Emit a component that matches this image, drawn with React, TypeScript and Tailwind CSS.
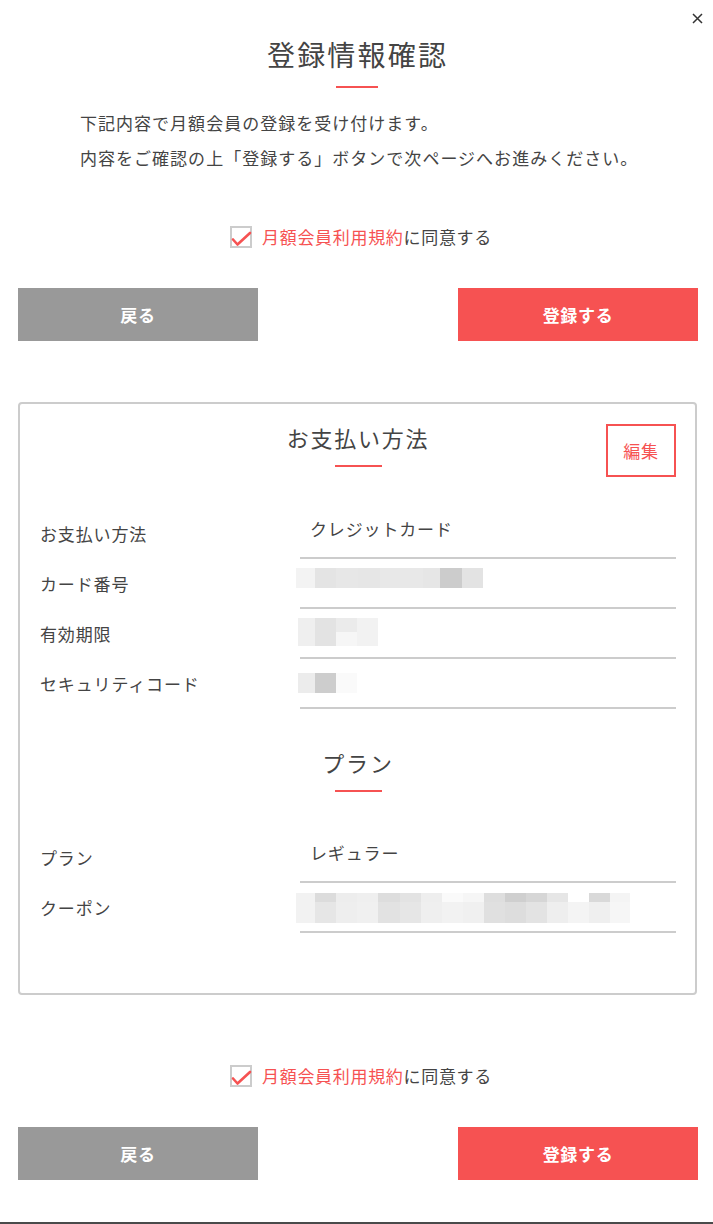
type Cell = { w: string; top: string; bottom: string; split: string };

// pixelated (masked) values
const cardNo: Cell[] = [
  { w: "w-[19px]", top: "bg-[#f3f3f3]", bottom: "bg-[#f3f3f3]", split: "h-[10px]" },
  { w: "w-[21px]", top: "bg-[#e4e4e4]", bottom: "bg-[#e4e4e4]", split: "h-[10px]" },
  { w: "w-[22px]", top: "bg-[#e7e7e7]", bottom: "bg-[#e7e7e7]", split: "h-[10px]" },
  { w: "w-[22px]", top: "bg-[#e6e6e6]", bottom: "bg-[#e6e6e6]", split: "h-[10px]" },
  { w: "w-[22px]", top: "bg-[#e8e8e8]", bottom: "bg-[#e8e8e8]", split: "h-[10px]" },
  { w: "w-[21px]", top: "bg-[#e8e8e8]", bottom: "bg-[#e8e8e8]", split: "h-[10px]" },
  { w: "w-[17px]", top: "bg-[#e6e6e6]", bottom: "bg-[#e6e6e6]", split: "h-[10px]" },
  { w: "w-[22px]", top: "bg-[#cccccc]", bottom: "bg-[#cccccc]", split: "h-[10px]" },
  { w: "w-[21px]", top: "bg-[#e3e3e3]", bottom: "bg-[#e3e3e3]", split: "h-[10px]" },
];

const expiry: Cell[] = [
  { w: "w-[17px]", top: "bg-[#efefef]", bottom: "bg-[#efefef]", split: "h-[14px]" },
  { w: "w-[21px]", top: "bg-[#e3e3e3]", bottom: "bg-[#e3e3e3]", split: "h-[14px]" },
  { w: "w-[21px]", top: "bg-[#ebebeb]", bottom: "bg-[#f6f6f6]", split: "h-[14px]" },
  { w: "w-[21px]", top: "bg-[#f2f2f2]", bottom: "bg-[#f2f2f2]", split: "h-[14px]" },
];

const security: Cell[] = [
  { w: "w-[17px]", top: "bg-[#ececec]", bottom: "bg-[#ececec]", split: "h-[10px]" },
  { w: "w-[21px]", top: "bg-[#cdcdcd]", bottom: "bg-[#cdcdcd]", split: "h-[10px]" },
  { w: "w-[21px]", top: "bg-[#fafafa]", bottom: "bg-[#fafafa]", split: "h-[10px]" },
];

const coupon: Cell[] = [
  { w: "w-[19px]", top: "bg-[#f2f2f2]", bottom: "bg-[#f2f2f2]", split: "h-[9px]" },
  { w: "w-[21px]", top: "bg-[#dcdcdc]", bottom: "bg-[#e6e6e6]", split: "h-[9px]" },
  { w: "w-[21px]", top: "bg-[#ededed]", bottom: "bg-[#eeeeee]", split: "h-[9px]" },
  { w: "w-[21px]", top: "bg-[#efefef]", bottom: "bg-[#f0f0f0]", split: "h-[9px]" },
  { w: "w-[22px]", top: "bg-[#dddddd]", bottom: "bg-[#e2e2e2]", split: "h-[9px]" },
  { w: "w-[21px]", top: "bg-[#e3e3e3]", bottom: "bg-[#e6e6e6]", split: "h-[9px]" },
  { w: "w-[21px]", top: "bg-[#eeeeee]", bottom: "bg-[#efefef]", split: "h-[9px]" },
  { w: "w-[21px]", top: "bg-[#fafafa]", bottom: "bg-[#f2f2f2]", split: "h-[9px]" },
  { w: "w-[21px]", top: "bg-[#f6f6f6]", bottom: "bg-[#f0f0f0]", split: "h-[9px]" },
  { w: "w-[21px]", top: "bg-[#dedede]", bottom: "bg-[#e0e0e0]", split: "h-[9px]" },
  { w: "w-[21px]", top: "bg-[#cfcfcf]", bottom: "bg-[#dddddd]", split: "h-[9px]" },
  { w: "w-[21px]", top: "bg-[#d6d6d6]", bottom: "bg-[#e3e3e3]", split: "h-[9px]" },
  { w: "w-[21px]", top: "bg-[#e6e6e6]", bottom: "bg-[#eeeeee]", split: "h-[9px]" },
  { w: "w-[21px]", top: "bg-[#ffffff]", bottom: "bg-[#f4f4f4]", split: "h-[9px]" },
  { w: "w-[21px]", top: "bg-[#d9d9d9]", bottom: "bg-[#efefef]", split: "h-[9px]" },
  { w: "w-[20px]", top: "bg-[#f4f4f4]", bottom: "bg-[#f6f6f6]", split: "h-[9px]" },
];

function Mosaic({ cells, h, className }: { cells: Cell[]; h: string; className: string }) {
  return (
    <div className={`flex ${h} ${className}`}>
      {cells.map((c, i) => (
        <div key={i} className={`flex flex-col ${c.w}`}>
          <div className={`${c.split} ${c.top}`} />
          <div className={`flex-1 ${c.bottom}`} />
        </div>
      ))}
    </div>
  );
}

function Agree() {
  return (
    <div className="flex items-center justify-center pl-[9px]">
      <span className="relative h-[22px] w-[22px] border-2 border-[#cccccc] bg-white">
        <svg className="absolute -left-[2px] -top-[2px]" width="22" height="22" viewBox="0 0 22 22">
          <path
            d="M3 13.5 L7.5 18.5 L20 7"
            fill="none"
            stroke="#f65252"
            strokeWidth="2.6"
            strokeLinecap="round"
            strokeLinejoin="round"
          />
        </svg>
      </span>
      <span className="ml-[10px] text-[17px] leading-[22px] tracking-[0.04em] text-[#444444]">
        <span className="text-[#f65252]">月額会員利用規約</span>に同意する
      </span>
    </div>
  );
}

function Buttons() {
  return (
    <div className="flex justify-between pl-[18px] pr-[15px]">
      <button className="h-[53px] w-[240px] bg-[#999999] text-[17px] font-bold tracking-[0.04em] text-white">
        戻る
      </button>
      <button className="h-[53px] w-[240px] bg-[#f65252] text-[17px] font-bold tracking-[0.04em] text-white">
        登録する
      </button>
    </div>
  );
}

function Heading({ children }: { children: React.ReactNode }) {
  return (
    <div className="flex flex-col items-center">
      <h2 className="text-[22px] leading-[30px] tracking-[0.08em] text-[#444444]">{children}</h2>
      <div className="mt-[13px] h-[2px] w-[47px] bg-[#f65252]" />
    </div>
  );
}

function Row({ label, children }: { label: string; children: React.ReactNode }) {
  return (
    <div className="flex h-[50px]">
      <div className="w-[260px] pt-[14px] text-[17px] leading-[22px] tracking-[0.05em] text-[#444444]">{label}</div>
      <div className="flex-1 border-b-2 border-[#cccccc]">{children}</div>
    </div>
  );
}

function Value({ children }: { children: React.ReactNode }) {
  return <div className="pl-[10px] pt-[9px] text-[17px] leading-[22px] tracking-[0.05em] text-[#444444]">{children}</div>;
}

export default function App() {
  return (
    <div className="relative flex h-[1224px] w-full flex-col bg-white font-['Noto_Sans_CJK_JP','Noto_Sans',sans-serif] text-[#444444]">
      <button className="absolute right-[10px] top-[13px]" aria-label="close">
        <svg width="11" height="11" viewBox="0 0 11 11">
          <path d="M1 1 L10 10 M10 1 L1 10" stroke="#333333" strokeWidth="1.5" />
        </svg>
      </button>

      <div className="mt-[37px] flex flex-col items-center">
        <h1 className="pl-[0.08em] text-[28px] leading-[34px] tracking-[0.08em] text-[#444444]">登録情報確認</h1>
        <div className="mt-[15px] h-[2px] w-[42px] bg-[#f65252]" />
      </div>

      <div className="mt-[17px] whitespace-nowrap pl-[80px] text-[17px] leading-[35px] tracking-[0.06em]">
        <p>下記内容で月額会員の登録を受け付けます。</p>
        <p>内容をご確認の上「登録する」ボタンで次ページへお進みください。</p>
      </div>

      <div className="mt-[51px]">
        <Agree />
      </div>
      <div className="mt-[40px]">
        <Buttons />
      </div>

      <div className="ml-[18px] mr-[16px] mt-[61px] rounded-[4px] border-2 border-[#cccccc] pb-[60px] pl-[20px] pr-[19px]">
        <div className="grid grid-cols-[1fr_auto_1fr] items-start pt-[18px]">
          <div />
          <Heading>お支払い方法</Heading>
          <div className="flex justify-end">
            <button className="mt-[2px] h-[53px] w-[70px] border-2 border-[#f65252] text-[17px] tracking-[0.04em] text-[#f65252]">
              編集
            </button>
          </div>
        </div>

        <div className="mt-[32px]">
          <Row label="お支払い方法">
            <Value>クレジットカード</Value>
          </Row>
          <Row label="カード番号">
            <Mosaic cells={cardNo} h="h-[20px]" className="-ml-[4px] mt-[9px]" />
          </Row>
          <Row label="有効期限">
            <Mosaic cells={expiry} h="h-[28px]" className="-ml-[2px] mt-[9px]" />
          </Row>
          <Row label="セキュリティコード">
            <Mosaic cells={security} h="h-[20px]" className="-ml-[2px] mt-[14px]" />
          </Row>
        </div>

        <div className="mt-[38px]">
          <Heading>プラン</Heading>
        </div>

        <div className="mt-[41px]">
          <Row label="プラン">
            <Value>レギュラー</Value>
          </Row>
          <Row label="クーポン">
            <Mosaic cells={coupon} h="h-[30px]" className="-ml-[4px] mt-[10px]" />
          </Row>
        </div>
      </div>

      <div className="mt-[70px]">
        <Agree />
      </div>
      <div className="mt-[40px]">
        <Buttons />
      </div>

      <div className="mt-auto h-[2px] w-full bg-[#4a4a4a]" />
    </div>
  );
}
